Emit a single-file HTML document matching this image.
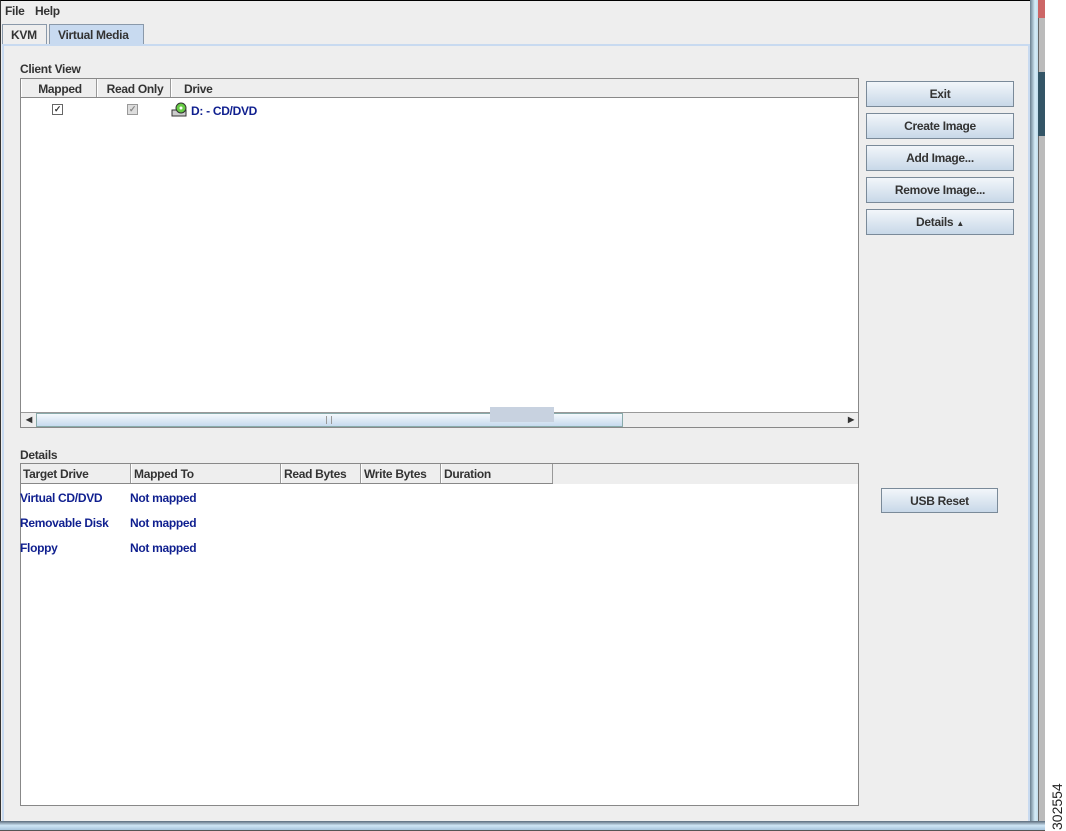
<!DOCTYPE html>
<html><head><style>
*{margin:0;padding:0;box-sizing:border-box}
body{width:1066px;height:831px;background:#fff;position:relative;overflow:hidden;font-family:"Liberation Sans",sans-serif;font-size:12px;font-weight:bold;color:#333;letter-spacing:-0.3px}
.a{position:absolute}
.btn{position:absolute;border:1px solid #7a8a99;background:linear-gradient(#f2f6fa,#c8d8e8);text-align:center;color:#333;line-height:25px}
.hd{position:absolute;top:0;height:100%;border-right:1px solid #999;border-left:1px solid #fff;padding-left:2px;line-height:20px;color:#333}
.blue{color:#0f1f8f;position:absolute}
</style></head><body>
<div class="a" style="left:0;top:0;width:1031px;height:831px;background:#eeeeee;border-left:1px solid #333;border-top:1px solid #000"></div>
<div class="a" style="left:5px;top:4px">File</div>
<div class="a" style="left:35px;top:4px">Help</div>
<div class="a" style="left:2px;top:24px;width:45px;height:21px;border:1px solid #8a99aa;border-bottom:none;background:#eee;padding-left:8px;line-height:20px">KVM</div>
<div class="a" style="left:49px;top:24px;width:95px;height:21px;border:1px solid #8a99aa;border-bottom:none;background:#c8daf0;padding-left:8px;line-height:20px">Virtual Media</div>
<div class="a" style="left:2px;top:44px;width:1029px;height:782px;border:2px solid #c8daf0;border-right-width:3px;border-bottom:3px solid #9ab"></div>
<div class="a" style="left:20px;top:62px">Client View</div>
<div class="a" style="left:20px;top:78px;width:839px;height:350px;background:#fff;border:1px solid #888"></div>
<div class="a" style="left:21px;top:79px;width:837px;height:19px;background:#eee;border-bottom:1px solid #888">
<div class="hd" style="left:0;width:76px;text-align:center">Mapped</div>
<div class="hd" style="left:76px;width:74px;text-align:center">Read Only</div>
<div class="hd" style="left:150px;width:687px;border-right:none;padding-left:12px">Drive</div>
</div>
<div class="a" style="left:52px;top:104px;width:11px;height:11px;border:1px solid #666;background:#fff;font-size:9px;line-height:9px;text-align:center">✓</div>
<div class="a" style="left:127px;top:104px;width:11px;height:11px;border:1px solid #999;background:#ddd;color:#888;font-size:9px;line-height:9px;text-align:center">✓</div>
<svg class="a" style="left:171px;top:102px" width="17" height="16"><rect x="1" y="8" width="14" height="6" fill="#ccc" stroke="#333"/><circle cx="10" cy="6" r="5" fill="#6c4" stroke="#333"/><circle cx="10" cy="6" r="1.5" fill="#fff"/></svg>
<div class="blue" style="left:191px;top:104px">D: - CD/DVD</div>
<div class="a" style="left:21px;top:412px;width:837px;height:15px;background:#eee;border-top:1px solid #999"></div>
<div class="a" style="left:26px;top:415px;font-size:8px">◀</div>
<div class="a" style="left:848px;top:415px;font-size:8px">▶</div>
<div class="a" style="left:36px;top:413px;width:587px;height:14px;background:linear-gradient(#f4f8fc,#c6daee);border:1px solid #8aa;"></div>
<div class="a" style="left:326px;top:416px;width:6px;height:8px;border-left:1px solid #999;border-right:1px solid #999"></div>
<div class="a" style="left:490px;top:407px;width:64px;height:15px;background:#c8d2e0"></div>
<div class="btn" style="left:866px;top:81px;width:148px;height:26px">Exit</div>
<div class="btn" style="left:866px;top:113px;width:148px;height:26px">Create Image</div>
<div class="btn" style="left:866px;top:145px;width:148px;height:26px">Add Image...</div>
<div class="btn" style="left:866px;top:177px;width:148px;height:26px">Remove Image...</div>
<div class="btn" style="left:866px;top:209px;width:148px;height:26px">Details <span style="font-size:8px">▲</span></div>
<div class="btn" style="left:881px;top:488px;width:117px;height:25px">USB Reset</div>
<div class="a" style="left:20px;top:448px">Details</div>
<div class="a" style="left:20px;top:463px;width:839px;height:343px;background:#fff;border:1px solid #888"></div>
<div class="a" style="left:21px;top:464px;width:837px;height:20px;background:#eee"></div>
<div class="a" style="left:21px;top:464px;width:532px;height:20px;border-bottom:1px solid #888">
<div class="hd" style="left:0;width:110px;border-left:none">Target Drive</div>
<div class="hd" style="left:110px;width:150px">Mapped To</div>
<div class="hd" style="left:260px;width:80px">Read Bytes</div>
<div class="hd" style="left:340px;width:80px">Write Bytes</div>
<div class="hd" style="left:420px;width:112px">Duration</div>
</div>
<div class="blue" style="left:20px;top:491px">Virtual CD/DVD</div>
<div class="blue" style="left:130px;top:491px">Not mapped</div>
<div class="blue" style="left:20px;top:516px">Removable Disk</div>
<div class="blue" style="left:130px;top:516px">Not mapped</div>
<div class="blue" style="left:20px;top:541px">Floppy</div>
<div class="blue" style="left:130px;top:541px">Not mapped</div>
<div class="a" style="left:1030px;top:0;width:15px;height:831px;background:linear-gradient(90deg,#6a8090,#d4ecf8,#b8d4e4,#8aa)"></div>
<div class="a" style="left:1038px;top:0;width:7px;height:831px;background:#bbb;border-left:1px solid #666"></div>
<div class="a" style="left:1038px;top:72px;width:7px;height:64px;background:#356"></div>
<div class="a" style="left:1038px;top:0;width:7px;height:18px;background:#c66"></div>
<div class="a" style="left:0;top:821px;width:1045px;height:10px;background:linear-gradient(#5a6a7a,#cfe6f6,#a8c4dc);border-bottom:1px solid #555"></div>
<div class="a" style="left:1047px;top:770px;width:20px;height:60px;font-weight:normal;font-size:14px;color:#222;writing-mode:vertical-rl;transform:rotate(180deg);line-height:20px;letter-spacing:0">302554</div>
</body></html>
